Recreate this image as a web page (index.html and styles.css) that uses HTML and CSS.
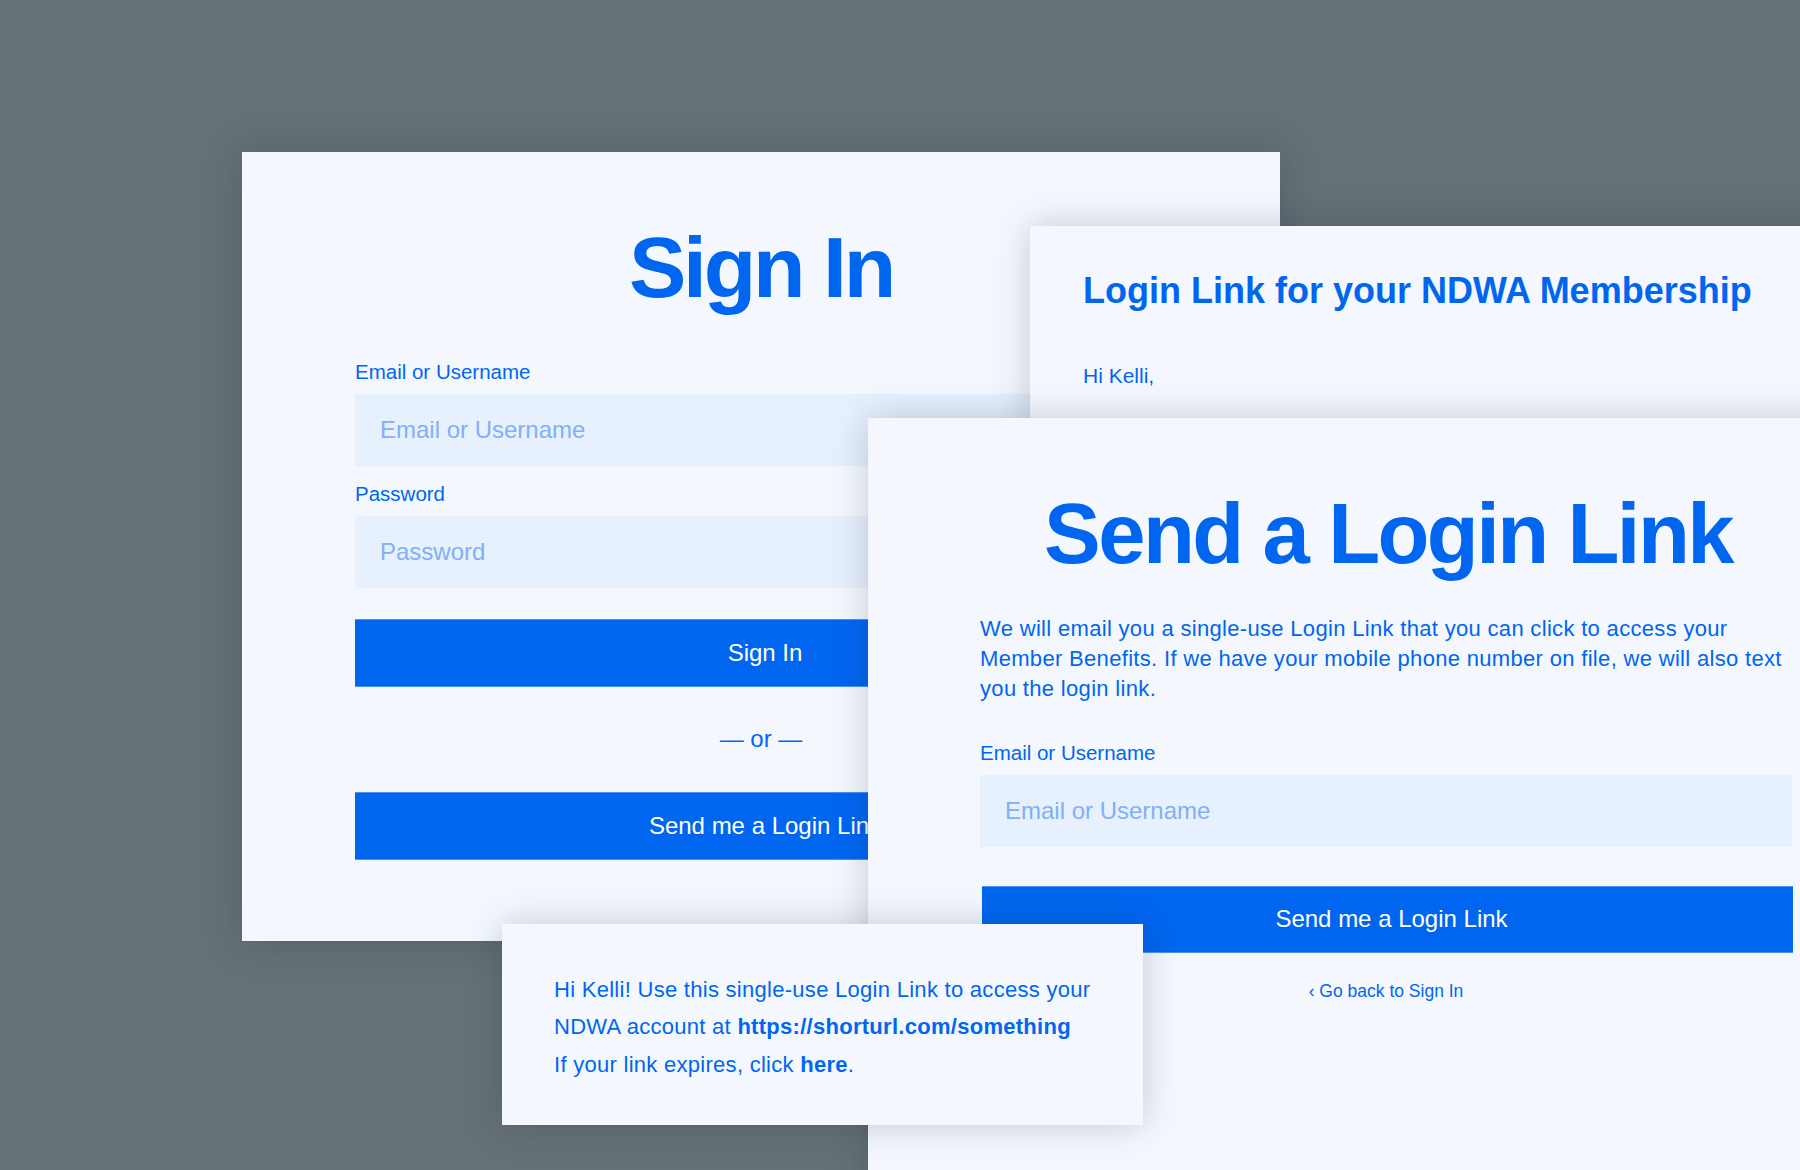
FILE: index.html
```html
<!DOCTYPE html>
<html lang="en">
<head>
<meta charset="utf-8">
<title>NDWA Login Link</title>
<link rel="stylesheet" href="styles.css">
</head>
<body>
<main class="canvas">
  <section class="card card-signin">
    <h1 class="title title-signin">Sign In</h1>
    <label class="label">Email or Username</label>
    <input class="field" type="text" placeholder="Email or Username">
    <label class="label label-gap">Password</label>
    <input class="field" type="password" placeholder="Password">
    <button class="btn btn-signin">Sign In</button>
    <div class="or">— or —</div>
    <button class="btn">Send me a Login Link</button>
  </section>

  <section class="card card-email">
    <h2 class="email-title">Login Link for your NDWA Membership</h2>
    <p class="email-hi">Hi Kelli,</p>
  </section>

  <section class="card card-send">
    <h1 class="title title-send">Send a Login Link</h1>
    <p class="intro">We will email you a single-use Login Link that you can click to access your<br>Member Benefits. If we have your mobile phone number on file, we will also text<br>you the login link.</p>
    <label class="label">Email or Username</label>
    <input class="field" type="text" placeholder="Email or Username">
    <button class="btn btn-send">Send me a Login Link</button>
    <a class="back" href="#">‹ Go back to Sign In</a>
  </section>

  <section class="card card-sms">
    <p class="sms">Hi Kelli! Use this single-use Login Link to access your<br>NDWA account at <b>https://shorturl.com/something</b><br>If your link expires, click <b>here</b>.</p>
  </section>
</main>
</body>
</html>
```

FILE: styles.css
```css
* { box-sizing: border-box; }

html, body {
  margin: 0;
  padding: 0;
  width: 1800px;
  height: 1170px;
  overflow: hidden;
}

body {
  background: #657176;
  font-family: "Liberation Sans", Arial, Helvetica, sans-serif;
  color: #0066f0;
}

.canvas {
  position: relative;
  width: 1800px;
  height: 1170px;
  overflow: hidden;
}

.card {
  position: absolute;
  background: #f4f8fe;
  box-shadow: 0 0 34px rgba(25, 35, 60, 0.22);
  display: flex;
  flex-direction: column;
}

/* ---------- Sign In card ---------- */
.card-signin {
  left: 242px;
  top: 152px;
  width: 1038px;
  height: 789px;
  padding: 72px 113px 0 113px;
  z-index: 1;
}

.title {
  margin: 0;
  font-weight: 700;
  line-height: 1;
  text-align: center;
  color: #0066f0;
}

.title-signin {
  font-size: 86px;
  letter-spacing: -3.2px;
  margin-bottom: 50px;
}

.label {
  display: block;
  font-size: 20.5px;
  line-height: 24.6px;
  color: #0066f0;
  margin-bottom: 9px;
}

.label-gap { margin-top: 16.5px; }

.field {
  display: block;
  width: 100%;
  height: 72px;
  border: none;
  outline: none;
  background: #e7f0fd;
  padding: 0 25px;
  font-family: inherit;
  font-size: 24px;
  color: #0066f0;
}

.field::placeholder { color: #80b0f6; }

.btn {
  display: block;
  width: 100%;
  height: 68px;
  margin-top: 31px;
  border: none;
  border-top: 1px solid #4a91f5;
  border-bottom: 1px solid #4a91f5;
  background: #0066f0;
  color: #ffffff;
  font-family: inherit;
  font-size: 24px;
  text-align: center;
  padding: 0 0 0 8px;
}

.or {
  text-align: center;
  font-size: 24px;
  line-height: 28px;
  height: 28px;
  margin-top: 38px;
  margin-bottom: 8px;
}

/* ---------- Email card ---------- */
.card-email {
  left: 1030px;
  top: 226px;
  width: 900px;
  height: 260px;
  padding: 43px 53px 0 53px;
  z-index: 2;
}

.email-title {
  margin: 0;
  font-size: 36px;
  line-height: 43px;
  font-weight: 700;
}

.email-hi {
  margin: 51px 0 0 0;
  font-size: 21px;
  line-height: 25px;
}

/* ---------- Send a Login Link card ---------- */
.card-send {
  left: 868px;
  top: 418px;
  width: 1036px;
  height: 900px;
  padding: 73px 112px 0 112px;
  z-index: 3;
}

.title-send {
  font-size: 85px;
  letter-spacing: -2.6px;
  margin-bottom: 38px;
  padding-left: 4px;
}

.intro {
  margin: 0 0 37px 0;
  font-size: 22px;
  line-height: 30px;
  letter-spacing: 0.32px;
  white-space: nowrap;
}

.btn-send {
  margin-top: 39px;
  height: 67px;
  margin-left: 2px;
  width: calc(100% - 1px);
}

.back {
  align-self: center;
  margin-top: 27px;
  font-size: 17.5px;
  line-height: 22px;
  color: #0066f0;
  text-decoration: none;
}

/* ---------- SMS card ---------- */
.card-sms {
  left: 502px;
  top: 924px;
  width: 641px;
  height: 201px;
  padding: 46.5px 40px 0 52px;
  z-index: 4;
}

.sms {
  margin: 0;
  font-size: 22px;
  line-height: 37.5px;
  letter-spacing: 0.28px;
  white-space: nowrap;
}

.sms b { font-weight: 700; }
```
